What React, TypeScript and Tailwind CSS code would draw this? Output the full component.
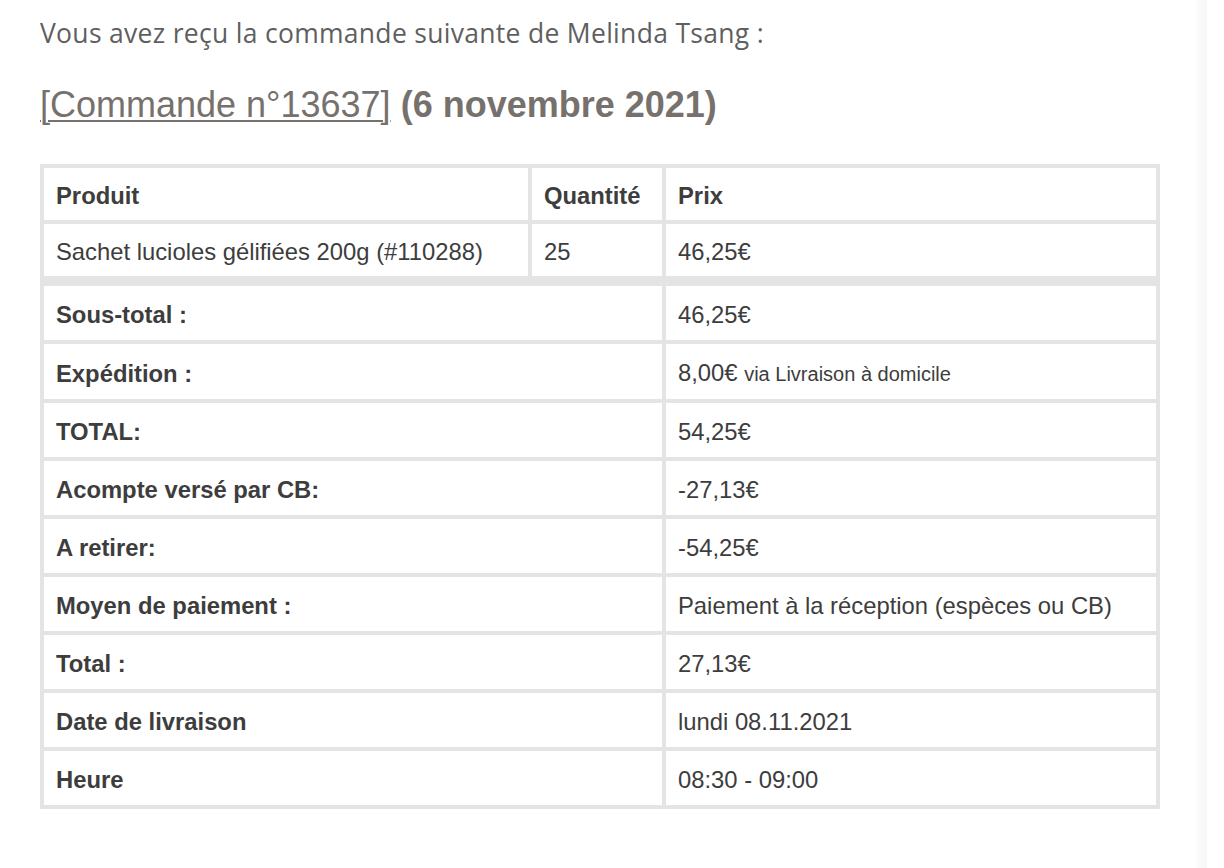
const ROWS: { label: string; value: React.ReactNode }[] = [
  { label: "Sous-total :", value: "46,25€" },
  {
    label: "Expédition :",
    value: (
      <>
        8,00€ <span className="text-[20px]">via Livraison à domicile</span>
      </>
    ),
  },
  { label: "TOTAL:", value: "54,25€" },
  { label: "Acompte versé par CB:", value: "-27,13€" },
  { label: "A retirer:", value: "-54,25€" },
  { label: "Moyen de paiement :", value: "Paiement à la réception (espèces ou CB)" },
  { label: "Total :", value: "27,13€" },
  { label: "Date de livraison", value: "lundi 08.11.2021" },
  { label: "Heure", value: "08:30 - 09:00" },
];

const cell = "border-2 border-[#e4e4e4] pl-[12px] pr-[13px] text-left align-middle";

export default function App() {
  return (
    <div className="flex min-h-[868px] bg-white">
      <div className="w-[1197px] pl-[40px] pt-[15px]">
        {/* intro */}
        <p
          className="h-[36px] leading-[36px] text-[26.5px] text-[#5f5f5f] tracking-[0.3px]"
          style={{ fontFamily: '"Open Sans", sans-serif' }}
        >
          Vous avez reçu la commande suivante de Melinda Tsang :
        </p>

        <h2
          className="mt-[33px] h-[42px] leading-[42px] text-[36px] text-[#76716c]"
          style={{ fontFamily: '"Liberation Sans", Arial, sans-serif' }}
        >
          <a href="#" className="underline decoration-[2px] underline-offset-[3px]">
            [Commande n°13637]
          </a>{" "}
          <span className="font-bold">(6 novembre 2021)</span>
        </h2>

        {/* order table */}
        <table
          className="mt-[38px] w-[1120px] table-fixed border-separate border-spacing-0 border-2 border-[#e4e4e4] text-[23.8px] text-[#3d3d3d]"
          style={{ fontFamily: '"Liberation Sans", Arial, sans-serif' }}
        >
          <colgroup>
            <col className="w-[488px]" />
            <col className="w-[134px]" />
            <col />
          </colgroup>
          <thead>
            <tr>
              <th className={`${cell} pt-[15px] pb-[11px] leading-[26px] font-bold`}>Produit</th>
              <th className={`${cell} pt-[15px] pb-[11px] leading-[26px] font-bold`}>Quantité</th>
              <th className={`${cell} pt-[15px] pb-[11px] leading-[26px] font-bold`}>Prix</th>
            </tr>
          </thead>
          <tbody>
            <tr>
              <td className={`${cell} pt-[15px] pb-[11px] leading-[26px]`}>
                Sachet lucioles gélifiées 200g (#110288)
              </td>
              <td className={`${cell} pt-[15px] pb-[11px] leading-[26px]`}>25</td>
              <td className={`${cell} pt-[15px] pb-[11px] leading-[26px]`}>46,25€</td>
            </tr>
          </tbody>
          <tfoot>
            {ROWS.map((r, i) => (
              <tr key={r.label}>
                <th
                  colSpan={2}
                  className={`${cell} pt-[16px] pb-[12px] leading-[26px] font-bold ${i === 0 ? "border-t-[8px]" : ""}`}
                >
                  {r.label}
                </th>
                <td
                  className={`${cell} pt-[16px] pb-[12px] leading-[26px] ${i === 0 ? "border-t-[8px]" : ""}`}
                >
                  {r.value}
                </td>
              </tr>
            ))}
          </tfoot>
        </table>
      </div>
      <div className="w-[10px] bg-gradient-to-r from-[#fbfbfb] to-[#f7f7f7]" />
      <div className="flex-1" />
    </div>
  );
}
